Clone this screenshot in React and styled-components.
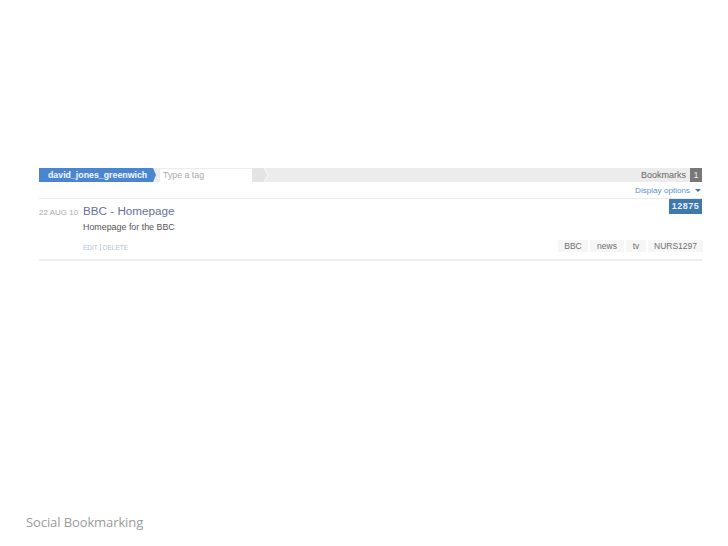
import React from "react";
import styled, { createGlobalStyle } from "styled-components";

const Global = createGlobalStyle`
  html, body { margin: 0; padding: 0; background: #fff; }
  body { font-family: "Liberation Sans", Arial, sans-serif; }
`;
const Page = styled.div`
  width: 728px; height: 546px; box-sizing: border-box; position: relative; overflow: hidden;
  padding: 168px 26px 0 39px; display: flex; flex-direction: column;
`;
const TagBar = styled.div`
  height: 14px; background: #ececec; display: flex; align-items: center; font-size: 9px;
`;
const UserCrumb = styled.div`
  height: 14px; width: 114px; flex: none; box-sizing: border-box; padding-left: 9px; background: #4a86cf; color: #f4f8fd;
  font-weight: 700; font-size: 8.8px; line-height: 14px; position: relative; white-space: nowrap;
  &::after { content: ""; position: absolute; left: 100%; top: 0; border-left: 3px solid #4a86cf; border-top: 7px solid transparent; border-bottom: 7px solid transparent; }
`;
const TagInput = styled.div`
  margin-left: 7px; width: 92px; flex: none; height: 13px; box-sizing: border-box; padding-left: 3px; background: #fff; color: #aaa;
  line-height: 13px; font-size: 8.8px;
`;
const Chevrons = styled.svg`
  width: 18px; height: 14px; flex: none;
`;
const Spacer = styled.div`flex: 1;`;
const BarLabel = styled.span`color: #666; font-size: 9px; margin-right: 4px;`;
const Count = styled.span`
  width: 12px; height: 14px; background: #777; color: #eee; text-align: center; line-height: 14px; font-size: 9px;
`;
const OptionsRow = styled.div`
  height: 16px; display: flex; align-items: center; justify-content: flex-end; gap: 5px; color: #5b8fcf; font-size: 8.1px;
  border-bottom: 1px solid #ececec;
`;
const Caret = styled.span`
  width: 0; height: 0; margin-right: 1px; border-top: 3px solid #3f78b8; border-left: 3.5px solid transparent; border-right: 3.5px solid transparent;
`;
const Entry = styled.div`
  height: 60px; position: relative; border-bottom: 2px solid #eeeeee; display: flex;
`;
const Score = styled.div`
  position: absolute; right: 0; top: 0; width: 33px; height: 15px; background: #3f78ad; color: #e8f0f8;
  font-size: 9px; font-weight: 700; letter-spacing: 0.5px; line-height: 15px; text-align: center;
`;
const DateCol = styled.div`
  width: 44px; flex: none; color: #aaa; font-size: 8px; padding-top: 9px; white-space: nowrap;
`;
const Body = styled.div`flex: 1; display: flex; flex-direction: column; padding-top: 4px;`;
const Title = styled.div`color: #66709f; font-size: 11.7px; line-height: 15px;`;
const Desc = styled.div`color: #555; font-size: 8.9px; line-height: 11px; margin-top: 4px;`;
const Footer = styled.div`
  display: flex; justify-content: space-between; align-items: center; margin-top: 7px;
`;
const Actions = styled.div`
  display: flex; align-items: center; color: #b4bfd0; font-size: 6.5px;
  & > span + span { border-left: 1px solid #c4d0e0; margin-left: 2px; padding-left: 2px; }
`;
const Tags = styled.div`display: flex; gap: 2px; margin-right: -1px; margin-bottom: 2px;`;
const Tag = styled.span`
  height: 12px; line-height: 12px; width: ${p => p.$w}px; text-align: center; background: #f6f6f6; color: #707070; font-size: 8.5px;
`;
const Caption = styled.div`
  position: absolute; left: 26px; top: 513px; color: #9b9b9b; font-family: "Open Sans", sans-serif; font-size: 13px; letter-spacing: -0.1px;
`;

export default function App() {
  return (
    <Page>
      <Global />
      <TagBar>
        <UserCrumb>david_jones_greenwich</UserCrumb>
        <TagInput>Type a tag</TagInput>
        <Chevrons viewBox="0 0 18 14">
          <path d="M0 0h12l4 7-4 7H0z" fill="#e4e4e4" />
          <path d="M12 0l4 7-4 7" fill="none" stroke="#f8f8f8" strokeWidth="1" />
        </Chevrons>
        <Spacer />
        <BarLabel>Bookmarks</BarLabel>
        <Count>1</Count>
      </TagBar>
      <OptionsRow>
        <span>Display options</span>
        <Caret />
      </OptionsRow>
      <Entry>
        <Score>12875</Score>
        <DateCol>22 AUG 10</DateCol>
        <Body>
          <Title>BBC - Homepage</Title>
          <Desc>Homepage for the BBC</Desc>
          <Footer>
            <Actions><span>EDIT</span><span>DELETE</span></Actions>
            <Tags>
              <Tag $w={30}>BBC</Tag>
              <Tag $w={34}>news</Tag>
              <Tag $w={20}>tv</Tag>
              <Tag $w={55}>NURS1297</Tag>
            </Tags>
          </Footer>
        </Body>
      </Entry>
      <Caption>Social Bookmarking</Caption>
    </Page>
  );
}
